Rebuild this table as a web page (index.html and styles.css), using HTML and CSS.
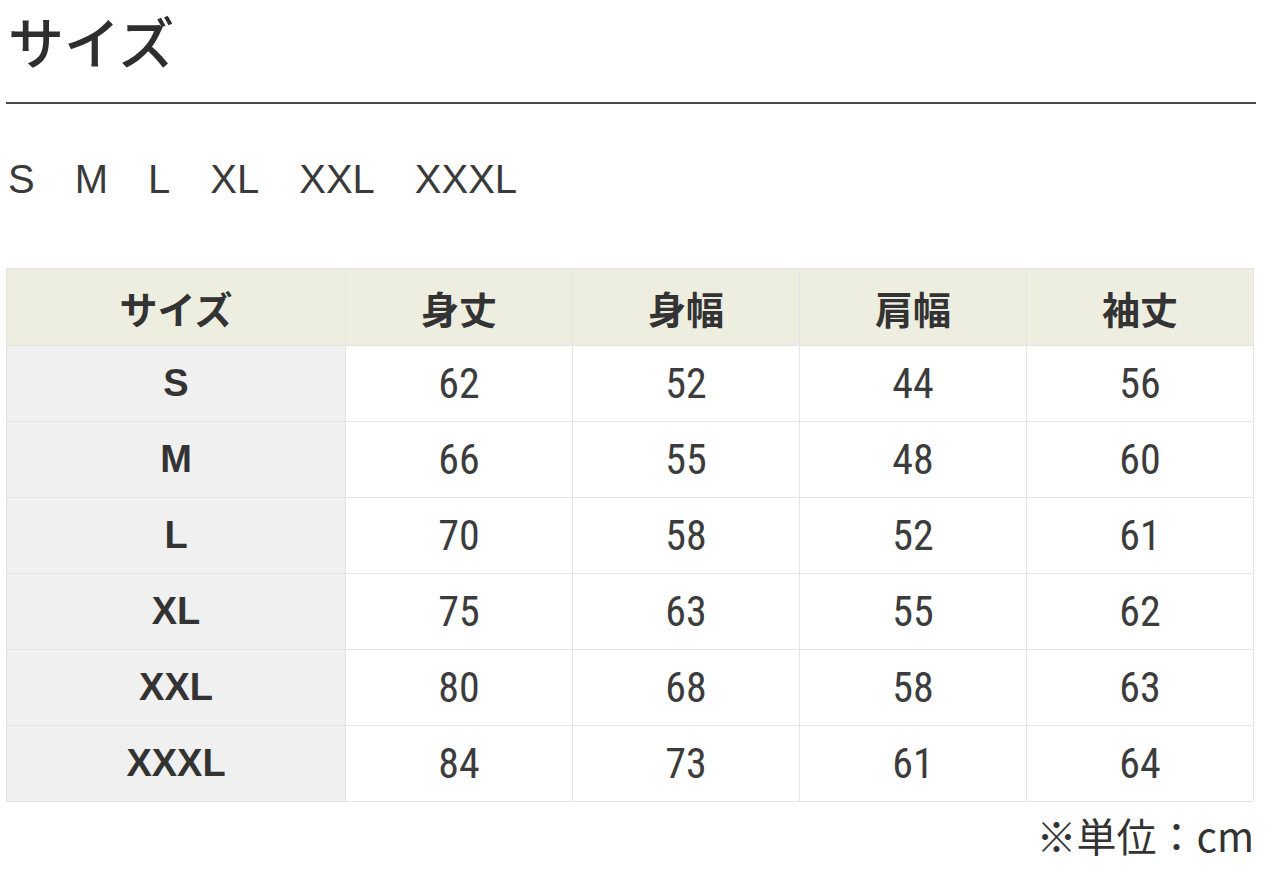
FILE: index.html
```html
<!DOCTYPE html>
<html lang="ja">
<head>
<meta charset="utf-8">
<title>サイズ</title>
<link rel="stylesheet" href="styles.css">
</head>
<body>
<div class="page">
  <h1 class="title">サイズ</h1>
  <div class="sizes">
    <span>S</span><span>M</span><span>L</span><span>XL</span><span>XXL</span><span>XXXL</span>
  </div>
  <table class="chart">
    <thead>
      <tr><th class="first">サイズ</th><th>身丈</th><th>身幅</th><th>肩幅</th><th>袖丈</th></tr>
    </thead>
    <tbody>
      <tr><th>S</th><td>62</td><td>52</td><td>44</td><td>56</td></tr>
      <tr><th>M</th><td>66</td><td>55</td><td>48</td><td>60</td></tr>
      <tr><th>L</th><td>70</td><td>58</td><td>52</td><td>61</td></tr>
      <tr><th>XL</th><td>75</td><td>63</td><td>55</td><td>62</td></tr>
      <tr><th>XXL</th><td>80</td><td>68</td><td>58</td><td>63</td></tr>
      <tr><th>XXXL</th><td>84</td><td>73</td><td>61</td><td>64</td></tr>
    </tbody>
  </table>
  <p class="note">※単位：cm</p>
</div>
</body>
</html>
```
FILE: styles.css
```css
html, body {
  margin: 0;
  padding: 0;
  background: #fff;
}
body {
  color: #333;
  font-family: "Noto Sans CJK JP", "Liberation Sans", sans-serif;
}
.page {
  padding: 0 24px 0 6px;
}
.title {
  margin: 0;
  font-size: 56px;
  font-weight: 500;
  line-height: 80px;
  height: 80px;
  padding: 0 0 22px 2px;
  border-bottom: 2px solid #4a4a4a;
  color: #2e2e2e;
}
.sizes {
  margin-top: 50px;
  height: 50px;
  display: flex;
  gap: 40px;
  align-items: center;
  padding-left: 2px;
  font-family: "Liberation Sans", sans-serif;
  font-size: 40px;
  color: #3a3a3a;
}
.chart {
  margin-top: 64px;
  width: 1244px;
  border-collapse: collapse;
  table-layout: fixed;
}
.chart th, .chart td {
  border: 1px solid #e4e4e4;
  text-align: center;
  padding: 0;
}
.chart thead th {
  height: 76px;
  background: #eeeee0;
  font-family: "Noto Sans CJK JP", sans-serif;
  font-weight: 700;
  font-size: 38px;
  width: 226px;
}
.chart thead th.first {
  width: 338px;
}
.chart tbody tr {
  height: 76px;
}
.chart tbody th {
  background: #f0f0f0;
  font-family: "Liberation Sans", sans-serif;
  font-weight: 700;
  font-size: 38px;
}
.chart tbody td {
  font-family: "Roboto Condensed", "Liberation Sans Narrow", "Roboto", sans-serif;
  font-weight: 400;
  font-size: 42px;
  color: #3c3c3c;
}
.note {
  margin: 8px 0 0;
  width: 1248px;
  text-align: right;
  font-size: 40px;
  line-height: 50px;
}
```
